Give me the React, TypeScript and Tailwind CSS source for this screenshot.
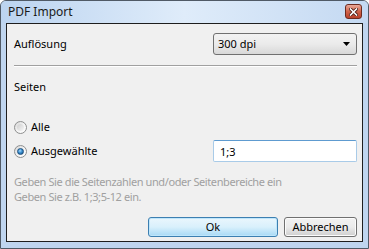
import { useState } from "react";

function Radio({ checked }: { checked: boolean }) {
    return (
        <span className="relative inline-block h-[13px] w-[13px] shrink-0 rounded-full border border-[#8e8f8f] bg-gradient-to-br from-[#d4d4d4] via-[#f4f4f4] to-[#ffffff]">
            {checked ? (
                <span className="absolute left-[2px] top-[2px] h-[7px] w-[7px] rounded-full border border-[#1c4f7e] bg-[radial-gradient(circle_at_40%_35%,#a9dcff_0%,#3a8fd0_45%,#164a7a_100%)]" />
            ) : (
                <span className="absolute left-[2px] top-[2px] h-[7px] w-[7px] rounded-full bg-gradient-to-br from-[#cfcfcf] to-[#f6f6f6]" />
            )}
        </span>
    );
}

export default function App() {
    const [pages, setPages] = useState<string>("1;3");

    return (
        <div
            className="flex h-[249px] w-[369px] flex-col rounded-t-[6px] border border-[#505a66] bg-[#bfd5ef] text-[11px] text-black"
            style={{ fontFamily: '"Noto Sans", "Liberation Sans", sans-serif' }}
        >
            {/* title bar */}
            <div className="flex h-[22px] items-center justify-between rounded-t-[5px] bg-gradient-to-r from-[#bcd4f0] via-[#dfecfa] to-[#c4d9f2] pl-[7px] pr-[6px]">
                <span className="text-[12px] text-[#1a1a1a]">PDF Import</span>
                <div className="mt-[-1px] flex h-[15px] w-[17px] items-center justify-center rounded-[3px] border border-[#6e2b1f] bg-gradient-to-b from-[#e9a99a] via-[#d0634a] to-[#b8402a]">
                    <svg width="9" height="8" viewBox="0 0 9 8">
                        <path d="M1.5 1 L7.5 7 M7.5 1 L1.5 7" stroke="#4a1b12" strokeWidth="3.2" strokeLinecap="square" />
                        <path d="M1.5 1 L7.5 7 M7.5 1 L1.5 7" stroke="#ffffff" strokeWidth="1.6" strokeLinecap="square" />
                    </svg>
                </div>
            </div>

            {/* client area */}
            <div className="mx-[5px] mb-[6px] flex flex-1 flex-col border border-[#1e1e1e] bg-[#f0f0f0] pl-[7px] pr-[5px]">
                <div className="mt-[9px] flex h-[22px] items-center justify-between">
                    <span>Auflösung</span>
                    <div className="flex h-[22px] w-[144px] items-center justify-between rounded-[3px] border border-[#707070] bg-gradient-to-b from-[#f2f2f2] via-[#ebebeb] to-[#d8d8d8] pl-[4px] pr-[6px]">
                        <span>300 dpi</span>
                        <svg width="7" height="4" viewBox="0 0 7 4">
                            <path d="M0 0 L7 0 L3.5 4 Z" fill="#000" />
                        </svg>
                    </div>
                </div>

                <div className="mt-[10px] border-b border-t border-b-white border-t-[#a0a0a0]" />

                <div className="mt-[12px] flex h-[16px] items-center">Seiten</div>

                <label className="mt-[24px] flex h-[16px] items-center gap-[4px]">
                    <Radio checked={false} />
                    <span>Alle</span>
                </label>

                <div className="mt-[5px] flex h-[22px] items-center justify-between">
                    <label className="flex items-center gap-[4px]">
                        <Radio checked={true} />
                        <span>Ausgewählte</span>
                    </label>
                    <input
                        value={pages}
                        onChange={(e) => setPages(e.target.value)}
                        className="h-[22px] w-[144px] rounded-[2px] border border-[#a9cbe8] border-t-[#5e9bd0] bg-white px-[6px] text-[11px] outline-none"
                    />
                </div>

                <div className="mt-[12px] leading-[15px] tracking-[-0.4px] text-[#a0a0a0]">
                    <div>Geben Sie die Seitenzahlen und/oder Seitenbereiche ein</div>
                    <div>Geben Sie z.B. 1;3;5-12 ein.</div>
                </div>

                <div className="mb-[4px] mt-auto flex justify-end gap-[6px]">
                    <button className="h-[20px] w-[130px] rounded-[3px] border border-[#3c7fb1] bg-gradient-to-b from-[#eaf6fd] via-[#d9f0fc] to-[#a7d9f5] shadow-[inset_0_0_0_1px_#bfe6fb] text-[11px]">
                        Ok
                    </button>
                    <button className="h-[20px] w-[73px] rounded-[3px] border border-[#707070] bg-gradient-to-b from-[#f2f2f2] via-[#ebebeb] to-[#cfcfcf] shadow-[inset_0_0_0_1px_#fcfcfc] text-[11px]">
                        Abbrechen
                    </button>
                </div>
            </div>
        </div>
    );
}
